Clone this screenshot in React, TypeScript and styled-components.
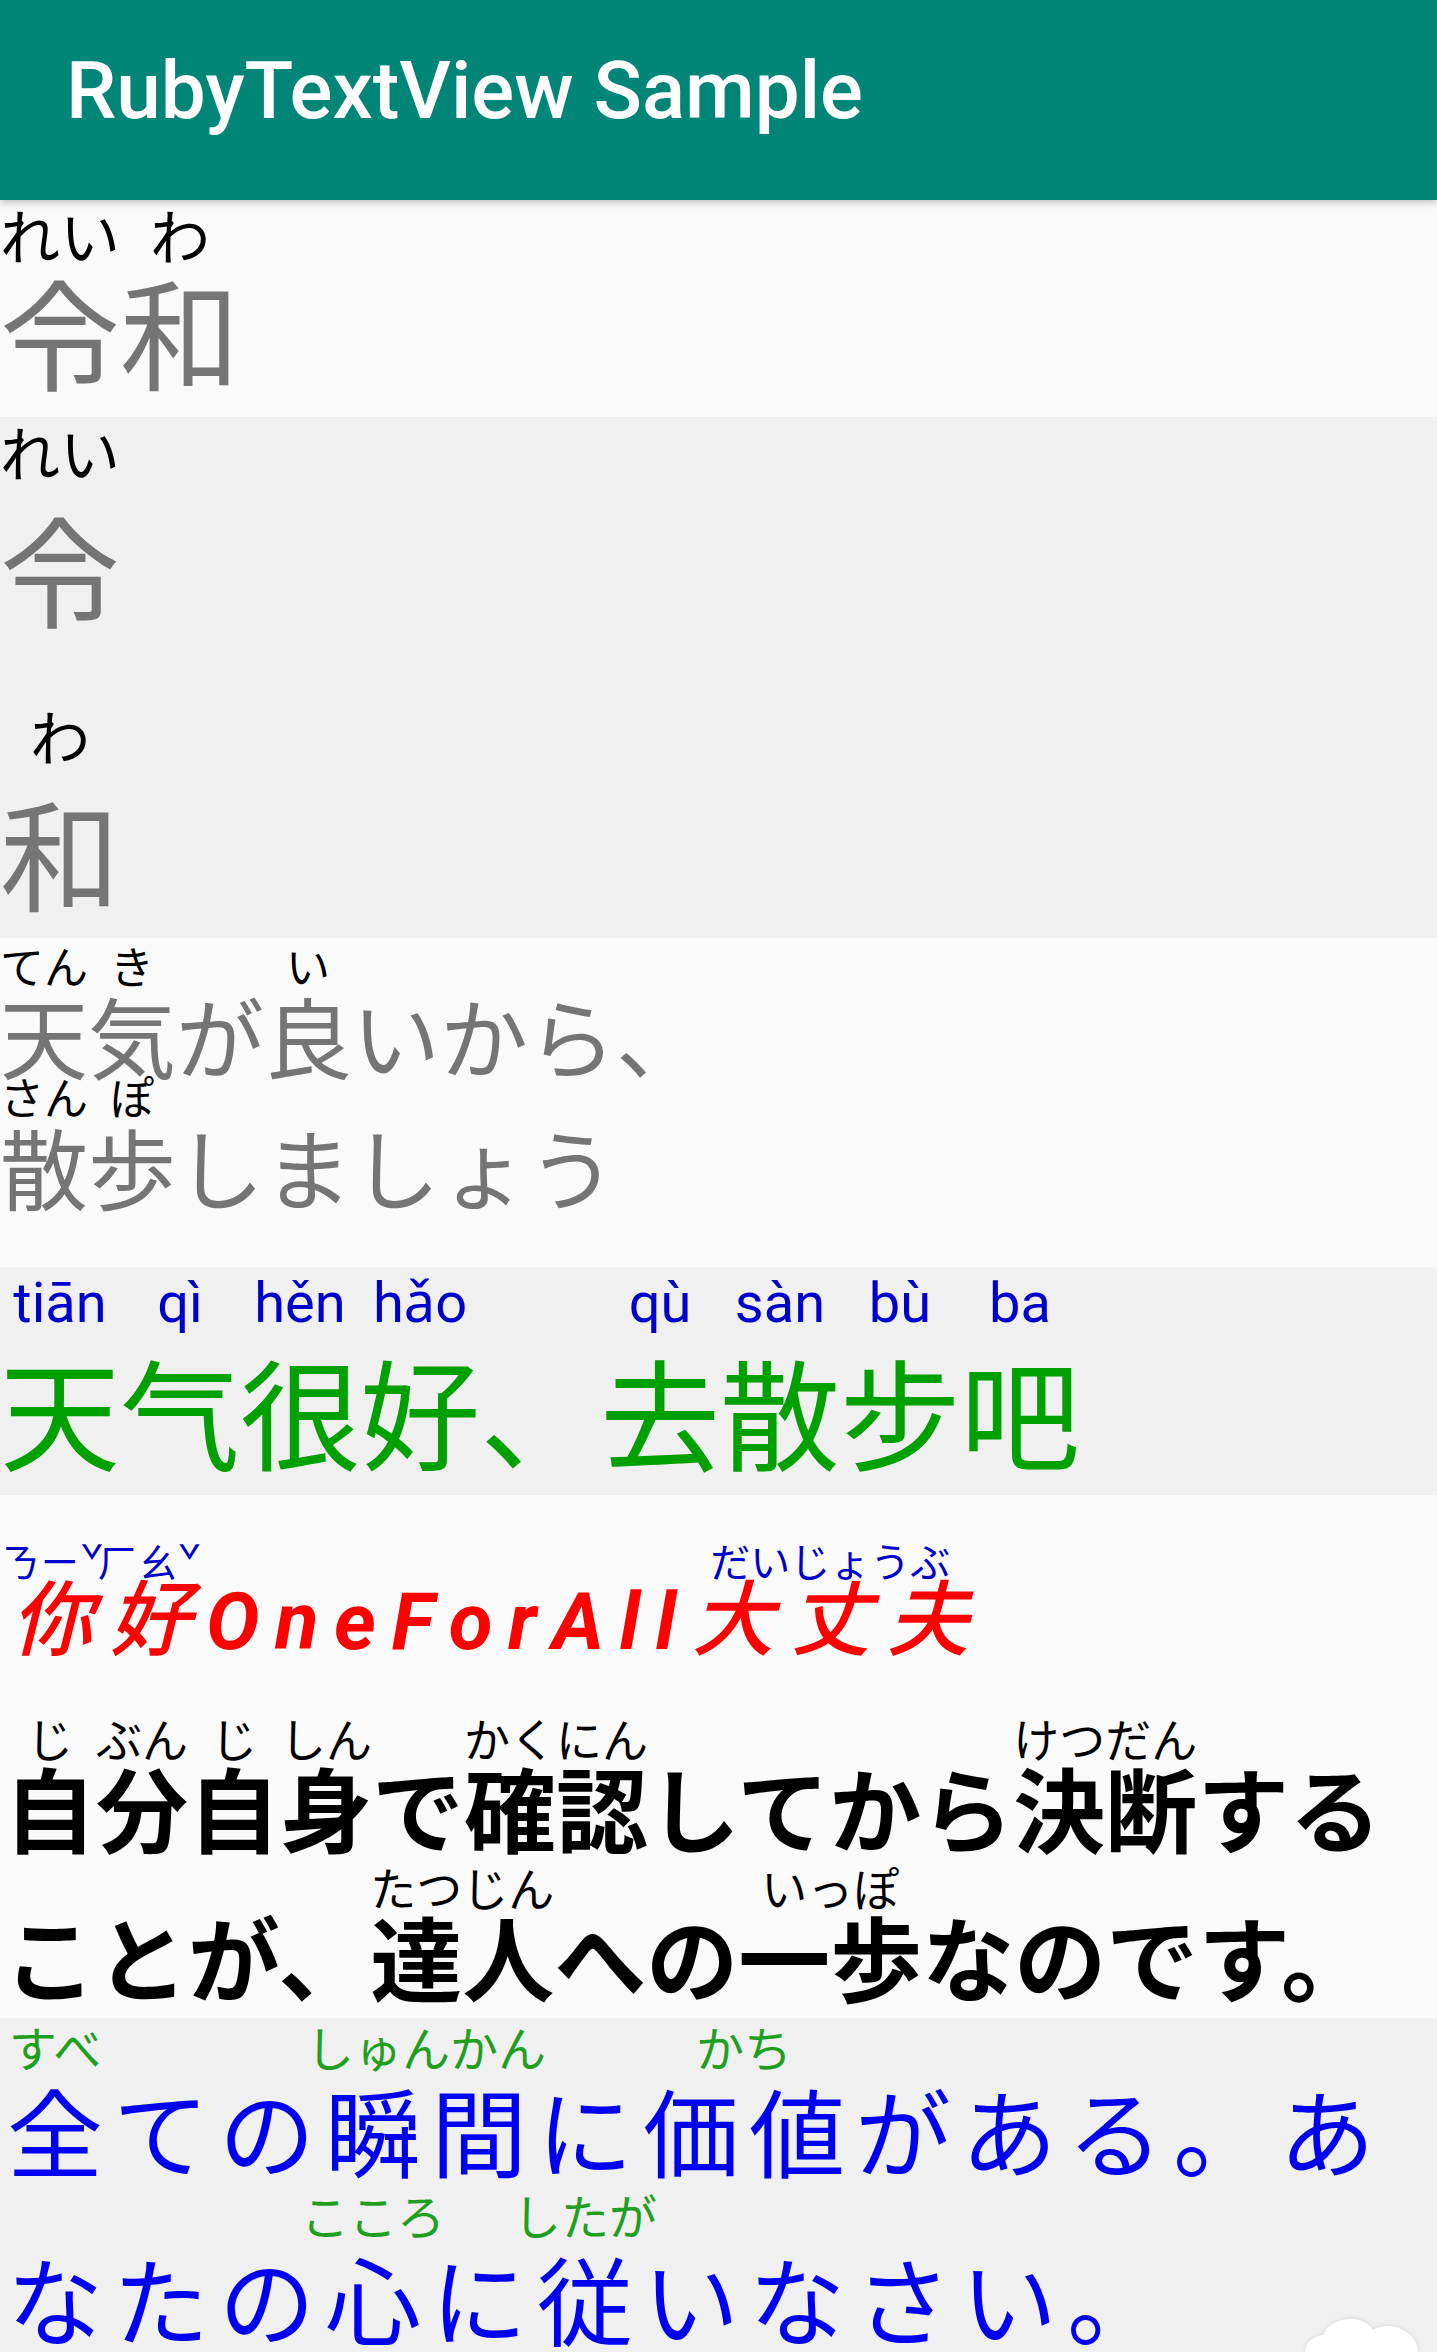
import React from 'react';
import styled, { createGlobalStyle } from 'styled-components';

const GlobalStyle = createGlobalStyle`
  html,
  body {
    margin: 0;
    padding: 0;
    background: #f0f0f0;
  }
  body {
    overflow: hidden;
  }
`;

const CJK = '"Noto Sans CJK JP", "Noto Sans CJK SC", sans-serif';
const LATIN = 'Roboto, "Noto Sans", sans-serif';

const Screen = styled.div`
  position: relative;
  width: 1437px;
  min-height: 2352px;
  overflow: hidden;
  background: #f0f0f0;
  font-family: ${CJK};
`;

const AppBar = styled.header`
  position: relative;
  z-index: 2;
  box-sizing: border-box;
  height: 200px;
  padding: 51px 66px 0;
  background: #008577;
  box-shadow: 0 3px 7px rgba(0, 0, 0, 0.22);
`;

const Title = styled.h1`
  margin: 0;
  font-family: ${LATIN};
  font-weight: 500;
  font-size: 80px;
  line-height: 1;
  color: #fff;
`;

const Panel = styled.section<{ $bg: string; $top: number; $bottom: number }>`
  background: ${(p) => p.$bg};
  padding: ${(p) => `${p.$top}px 0 ${p.$bottom}px`};
`;

const Line = styled.div`
  display: flex;
  align-items: flex-end;
  white-space: nowrap;
`;

const Unit = styled.span`
  display: inline-flex;
  flex-direction: column;
  align-items: center;
`;

// ruby sits centred on its base and may hang over both sides
const Rt = styled.span`
  display: flex;
  justify-content: center;
  width: 0;
  height: 1em;
  line-height: 1;
  white-space: nowrap;
  font-style: normal;
  font-weight: 400;
`;

const Rb = styled.span`
  display: block;
  line-height: 1;
  white-space: pre;
`;

const Latin = styled.span`
  font-family: ${LATIN};
  font-weight: 700;
  font-size: 0.976em;
  line-height: 0;
`;

type BlockProps = {
  $size: number;
  $color: string;
  $rubySize: number;
  $rubyColor: string;
  $rubyFont?: string;
  $weight?: number;
  $italic?: boolean;
  $spacing?: number;
  $rubyGap: number;
  $lineGap?: number;
  $offset?: number;
  $indent?: number;
};

const Block = styled.div<BlockProps>`
  margin-top: ${(p) => p.$offset ?? 0}px;
  padding-left: ${(p) => p.$indent ?? 0}px;
  color: ${(p) => p.$color};

  ${Line} + ${Line} {
    margin-top: ${(p) => p.$lineGap ?? 0}px;
  }

  ${Rt} {
    margin-bottom: ${(p) => p.$rubyGap}px;
    margin-right: ${(p) => p.$spacing ?? 0}px;
    font-family: ${(p) => p.$rubyFont ?? CJK};
    font-size: ${(p) => p.$rubySize}px;
    color: ${(p) => p.$rubyColor};
  }

  ${Rb} {
    font-size: ${(p) => p.$size}px;
    font-weight: ${(p) => p.$weight ?? 400};
    font-style: ${(p) => (p.$italic ? 'italic' : 'normal')};
    letter-spacing: ${(p) => p.$spacing ?? 0}px;
  }
`;

const TouchBlob = styled.svg`
  position: absolute;
  right: 14px;
  bottom: 0;
  width: 122px;
  height: 40px;
  filter: drop-shadow(0 0 2px rgba(0, 0, 0, 0.12));
`;

type Seg = { base: string; ruby?: string };

// "{base|ruby}" marks annotated text, everything else is plain
const parse = (src: string): Seg[] => {
  const out: Seg[] = [];
  const re = /\{([^|}]+)\|([^}]+)\}|([^{]+)/g;
  let m: RegExpExecArray | null;
  while ((m = re.exec(src))) {
    if (m[3]) out.push({ base: m[3] });
    else out.push({ base: m[1], ruby: m[2] });
  }
  return out;
};

function RubyLine({ src }: { src: string }): JSX.Element {
  return (
    <Line>
      {parse(src).map((s, i) => (
        <Unit key={i}>
          <Rt>{s.ruby ?? ''}</Rt>
          <Rb>{/^[A-Za-z]+$/.test(s.base) ? <Latin>{s.base}</Latin> : s.base}</Rb>
        </Unit>
      ))}
    </Line>
  );
}

function App(): JSX.Element {
  return (
    <Screen>
      <GlobalStyle />
      <AppBar>
        <Title>RubyTextView Sample</Title>
      </AppBar>

      <Panel $bg='#fafafa' $top={4} $bottom={27}>
        <Block $size={120} $color='#757575' $rubySize={60} $rubyColor='#000' $rubyGap={6}>
          <RubyLine src='{令|れい}{和|わ}' />
        </Block>
      </Panel>

      <Panel $bg='#f0f0f0' $top={4} $bottom={27}>
        <Block $size={120} $color='#757575' $rubySize={60} $rubyColor='#000' $rubyGap={26} $lineGap={78}>
          <RubyLine src='{令|れい}' />
          <RubyLine src='{和|わ}' />
        </Block>
      </Panel>

      <Panel $bg='#fafafa' $top={5} $bottom={58}>
        <Block $size={88} $color='#757575' $rubySize={44} $rubyColor='#000' $rubyGap={3} $lineGap={-4}>
          <RubyLine src='{天|てん}{気|き}が{良|い}いから、' />
          <RubyLine src='{散|さん}{歩|ぽ}しましょう' />
        </Block>
      </Panel>

      <Panel $bg='#f0f0f0' $top={8} $bottom={25}>
        <Block
          $size={120}
          $color='#00a000'
          $rubySize={56}
          $rubyColor='#0000cc'
          $rubyFont={LATIN}
          $rubyGap={19}
        >
          <RubyLine src='{天|tiān}{气|qì}{很|hěn}{好|hǎo}、{去|qù}{散|sàn}{步|bù}{吧|ba}' />
        </Block>
      </Panel>

      <Panel $bg='#fafafa' $top={45} $bottom={17}>
        <Block
          $indent={11}
          $size={82}
          $color='#ff0000'
          $rubySize={40}
          $rubyColor='#0000cc'
          $rubyGap={-7}
          $weight={500}
          $italic
          $spacing={15.5}
        >
          <RubyLine src='{你|ㄋㄧˇ}{好|ㄏㄠˇ}OneForAll{大丈夫|だいじょうぶ}' />
        </Block>
        <Block
          $offset={59}
          $indent={4}
          $size={92}
          $color='#000'
          $rubySize={46}
          $rubyColor='#000'
          $rubyGap={0}
          $lineGap={11}
          $weight={700}
        >
          <RubyLine src='{自|じ}{分|ぶん}{自|じ}{身|しん}で{確認|かくにん}してから{決断|けつだん}する' />
          <RubyLine src='ことが、{達人|たつじん}への{一歩|いっぽ}なのです。' />
        </Block>
      </Panel>

      <Panel $bg='#f0f0f0' $top={4} $bottom={0}>
        <Block
          $indent={7}
          $size={96}
          $color='#0000f0'
          $rubySize={48}
          $rubyColor='#1f9f1f'
          $rubyGap={11}
          $lineGap={13}
          $spacing={10}
        >
          <RubyLine src='{全|すべ}ての{瞬間|しゅんかん}に{価値|かち}がある。あ' />
          <RubyLine src='なたの{心|こころ}に{従|したが}いなさい。' />
        </Block>
      </Panel>

      <TouchBlob viewBox='0 0 122 40'>
        <path
          d='M4 40 C4 30 12 24 22 23 C26 13 36 7 50 7 C62 7 68 12 72 18 C80 13 94 12 104 19 C112 24 117 31 117 40 Z'
          fill='#ffffff'
        />
      </TouchBlob>
    </Screen>
  );
}

export default App;
